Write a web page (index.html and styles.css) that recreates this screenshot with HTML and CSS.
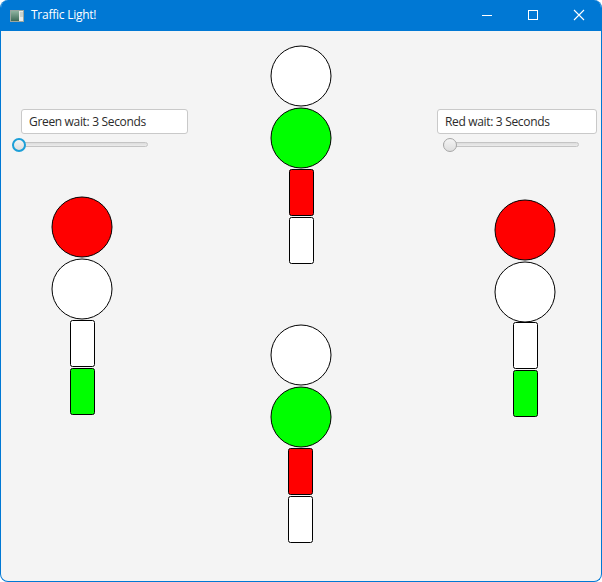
FILE: index.html
```html
<!DOCTYPE html>
<html lang="en">
<head>
<meta charset="utf-8">
<title>Traffic Light!</title>
<link rel="stylesheet" href="styles.css">
</head>
<body>
<div class="window">
  <div class="titlebar">
    <svg class="app-icon" width="14" height="12" viewBox="0 0 14 12">
      <defs>
        <linearGradient id="ig" x1="0" y1="0" x2="0" y2="1">
          <stop offset="0" stop-color="#8fb3a0"/>
          <stop offset="1" stop-color="#3f6b58"/>
        </linearGradient>
      </defs>
      <rect x="0.5" y="0.5" width="13" height="11" fill="#e8ecea" stroke="#9aa6a0"/>
      <rect x="1" y="1" width="8" height="10" fill="url(#ig)"/>
      <rect x="10" y="2" width="3" height="5" fill="#c9d3ce"/>
    </svg>
    <span class="title">Traffic Light!</span>
    <div class="controls">
      <svg class="ctl" width="46" height="30" viewBox="0 0 46 30"><path d="M18 15.5h10" stroke="#fff" stroke-width="1"/></svg>
      <svg class="ctl" width="46" height="30" viewBox="0 0 46 30"><rect x="18.5" y="10.5" width="9" height="9" fill="none" stroke="#fff" stroke-width="1"/></svg>
      <svg class="ctl" width="46" height="30" viewBox="0 0 46 30"><path d="M18 10l10 10M28 10l-10 10" stroke="#fff" stroke-width="1.1"/></svg>
    </div>
  </div>
  <div class="content">
    <div class="col col-left">
      <div class="field field-green">Green wait: 3 Seconds</div>
      <div class="slider slider-focused"><div class="track"></div><div class="thumb"></div></div>
      <svg class="light light-left" width="62" height="220" viewBox="0 0 62 220">
        <circle cx="31" cy="31" r="30" fill="#ff0000" stroke="#000"/>
        <circle cx="31" cy="93" r="30" fill="#fff" stroke="#000"/>
        <rect x="19.5" y="124.5" width="24" height="46" rx="2" fill="#fff" stroke="#000"/>
        <rect x="19.5" y="172.5" width="24" height="46" rx="2" fill="#00ff00" stroke="#000"/>
      </svg>
    </div>
    <div class="col col-center">
      <svg class="light light-top" width="62" height="220" viewBox="0 0 62 220">
        <circle cx="31" cy="31" r="30" fill="#fff" stroke="#000"/>
        <circle cx="31" cy="93" r="30" fill="#00ff00" stroke="#000"/>
        <rect x="19.5" y="124.5" width="24" height="46" rx="2" fill="#ff0000" stroke="#000"/>
        <rect x="19.5" y="172.5" width="24" height="46" rx="2" fill="#fff" stroke="#000"/>
      </svg>
      <svg class="light light-bottom" width="62" height="220" viewBox="0 0 62 220">
        <circle cx="31" cy="31" r="30" fill="#fff" stroke="#000"/>
        <circle cx="31" cy="93" r="30" fill="#00ff00" stroke="#000"/>
        <rect x="18.5" y="124.5" width="24" height="46" rx="2" fill="#ff0000" stroke="#000"/>
        <rect x="18.5" y="172.5" width="24" height="46" rx="2" fill="#fff" stroke="#000"/>
      </svg>
    </div>
    <div class="col col-right">
      <div class="field field-red">Red wait: 3 Seconds</div>
      <div class="slider"><div class="track"></div><div class="thumb"></div></div>
      <svg class="light light-right" width="62" height="220" viewBox="0 0 62 220">
        <circle cx="31" cy="31" r="30" fill="#ff0000" stroke="#000"/>
        <circle cx="31" cy="93" r="30" fill="#fff" stroke="#000"/>
        <rect x="19.5" y="123.5" width="24" height="46" rx="2" fill="#fff" stroke="#000"/>
        <rect x="19.5" y="171.5" width="24" height="46" rx="2" fill="#00ff00" stroke="#000"/>
      </svg>
    </div>
  </div>
</div>
</body>
</html>
```

FILE: styles.css
```css
html, body {
  margin: 0;
  padding: 0;
  background: #ffffff;
}

.window {
  box-sizing: border-box;
  width: 602px;
  height: 582px;
  border: 1px solid #0078d4;
  border-top: none;
  border-radius: 8px 8px 8px 8px;
  overflow: hidden;
  display: flex;
  flex-direction: column;
  background: #f4f4f4;
  font-family: "Segoe UI", "Open Sans", "Noto Sans", sans-serif;
}

.titlebar {
  height: 31px;
  flex: 0 0 31px;
  margin: 0 -1px;
  background: #0078d4;
  display: flex;
  align-items: center;
  color: #ffffff;
}

.app-icon {
  margin-left: 10px;
  margin-top: 0;
  flex: none;
}

.title {
  margin-left: 7px;
  font-size: 12px;
  line-height: 16px;
  padding-bottom: 1px;
  letter-spacing: -0.25px;
}

.controls {
  margin-left: auto;
  display: flex;
  align-self: flex-start;
}

.ctl {
  display: block;
}

.content {
  flex: 1;
  display: flex;
}

.col {
  display: flex;
  flex-direction: column;
  align-items: flex-start;
}

.col-left {
  width: 200px;
}

.col-center {
  width: 200px;
}

.col-right {
  flex: 1;
}

.field {
  box-sizing: border-box;
  height: 25px;
  margin-top: 78px;
  padding: 0 7px;
  background: #ffffff;
  border: 1px solid #c9c9c9;
  border-radius: 3px;
  font-size: 12px;
  line-height: 23px;
  color: #2b2b2b;
  white-space: nowrap;
  letter-spacing: -0.33px;
}

.field-green {
  width: 167px;
  margin-left: 20px;
}

.field-red {
  width: 160px;
  margin-left: 36px;
}

.slider {
  position: relative;
  width: 136px;
  height: 14px;
  margin-top: 4px;
}

.col-left .slider {
  margin-left: 11px;
}

.col-right .slider {
  margin-left: 42px;
}

.track {
  position: absolute;
  left: 0;
  right: 0;
  top: 4px;
  height: 5px;
  box-sizing: border-box;
  border: 1px solid #c4c4c4;
  border-radius: 3px;
  background: linear-gradient(#dcdcdc, #ececec);
}

.thumb {
  position: absolute;
  left: 0;
  top: 0;
  width: 14px;
  height: 14px;
  box-sizing: border-box;
  border-radius: 50%;
  border: 1px solid #a6a6a6;
  background: linear-gradient(#f4f4f4, #dedede);
}

.slider-focused .thumb {
  border: 2px solid #1c9fd8;
}

.light {
  display: block;
  flex: none;
}

.light-left {
  margin-left: 50px;
  margin-top: 44px;
}

.light-top {
  margin-left: 69px;
  margin-top: 14px;
}

.light-bottom {
  margin-left: 69px;
  margin-top: 59px;
}

.light-right {
  margin-left: 93px;
  margin-top: 47px;
}
```
